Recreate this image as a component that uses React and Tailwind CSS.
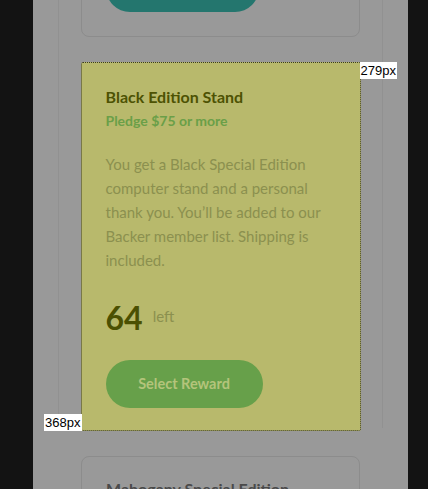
export default function App() {
  return (
    <div className="w-[428px] h-[489px] overflow-hidden bg-[#131313] flex pl-[33px]" style={{ fontFamily: "Lato, 'Open Sans', sans-serif" }}>
      <div className="w-[375px] h-full bg-[#999999] flex justify-center">
        <div className="w-[325px] h-full border-x border-[#919191] flex flex-col items-center gap-[25px] -mt-[61px]">
          {/* top card (partially visible) */}
          <div className="w-[279px] rounded-[8px] border border-[#8c8c8c] p-6 shrink-0">
            <div className="w-[153px] h-12 rounded-full bg-[#24766e]" />
          </div>

          {/* highlighted card */}
          <div className="relative w-[280px] h-[369px] shrink-0 rounded-[2px] bg-[#b8b96c] border border-dotted border-[#3b3b22] px-6 pt-6 flex flex-col">
            <div className="text-[16px] leading-[20px] font-bold text-[#4d5203]">Black Edition Stand</div>
            <div className="mt-1 text-[14px] leading-[20px] font-bold text-[#6a9f48]">Pledge $75 or more</div>
            <p className="mt-[21px] text-[15px] leading-[24px] text-[#8b904f]">
              You get a Black Special Edition computer stand and a personal thank you. You’ll be added to our Backer member list. Shipping is included.
            </p>
            <div className="mt-[26px] h-10 flex items-center gap-[10px]">
              <span className="text-[32px] font-bold leading-[40px] text-[#4b5002]">64</span>
              <span className="text-[15px] text-[#8b904f] mt-[-4px]">left</span>
            </div>
            <button className="mt-[22px] w-[157px] h-12 rounded-full bg-[#67a04a] text-[14.5px] font-bold text-[#b4c47b]">Select Reward</button>

            <div className="absolute left-full top-[-1px] bg-white px-[1px] h-[17px] flex items-center text-[13px] text-black" style={{ fontFamily: "'Liberation Sans', Arial, sans-serif" }}>279px</div>
            <div className="absolute right-full bottom-[-1px] bg-white px-[1px] h-[17px] flex items-center text-[13px] text-black" style={{ fontFamily: "'Liberation Sans', Arial, sans-serif" }}>368px</div>
          </div>

          {/* next card */}
          <div className="w-[279px] shrink-0 rounded-[8px] border border-[#8c8c8c] px-6 pt-[22px] pb-6">
            <div className="text-[16px] leading-[20px] font-bold text-[#4a4a4a]">Mahogany Special Edition</div>
          </div>
        </div>
      </div>
    </div>
  );
}
